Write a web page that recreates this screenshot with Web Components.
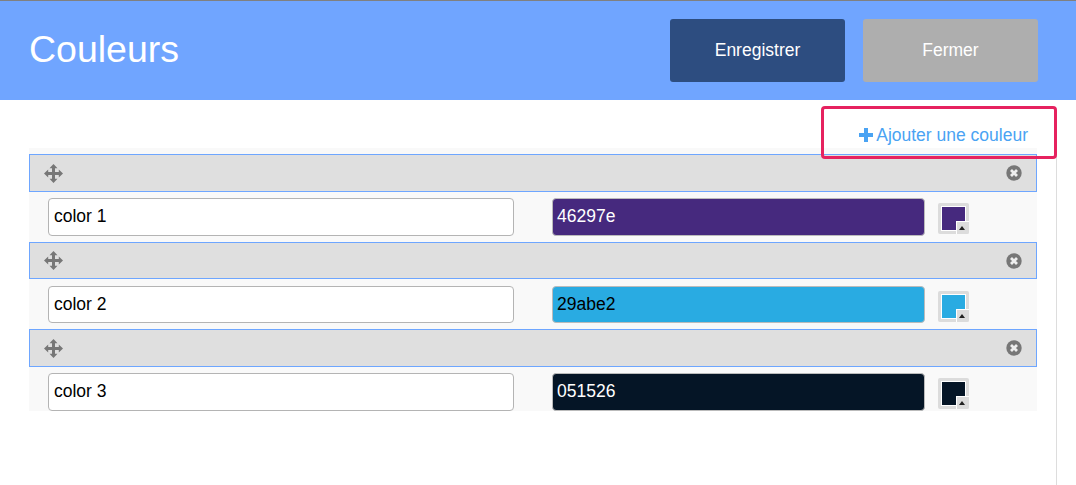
<!DOCTYPE html>
<html>
<head>
<meta charset="utf-8">
<style>
  html, body { margin: 0; padding: 0; background: #fff; overflow: hidden; }
  body { font-family: "Liberation Sans", Arial, sans-serif; }
</style>
</head>
<body>
<colors-page></colors-page>

<template id="page-tpl">
  <style>
    :host { display: block; height: 485px; position: relative; overflow: hidden; }
    header {
      display: flex; align-items: center; height: 99px;
      border-top: 1px solid #808080; background: #70a5ff;
      padding: 0 38px 0 29px;
    }
    h1 { flex: 1; margin: 0 0 2px; font-size: 37.5px; font-weight: 400; color: #fff; }
    .actions { display: flex; gap: 18px; margin-bottom: 1px; }
    .toolbar {
      height: 48px; box-sizing: border-box; width: 1028px;
      display: flex; justify-content: flex-end; align-items: flex-start;
      padding-top: 25px;
    }
    .panel {
      width: 1056px; height: 337px; box-sizing: content-box;
      border-right: 1px solid #ddd;
    }
    .list { margin: 0 19px 0 29px; padding-top: 6px; background: #f9f9f9; }
    .mark {
      position: absolute; left: 821px; top: 106px; width: 236px; height: 53px;
      box-sizing: border-box; border: 3px solid #e6225f; border-radius: 4px;
    }
  </style>
  <header>
    <h1>Couleurs</h1>
    <div class="actions">
      <flat-button style="--bg:#2d4d80">Enregistrer</flat-button>
      <flat-button style="--bg:#aeaeae">Fermer</flat-button>
    </div>
  </header>
  <div class="toolbar"><add-link>Ajouter une couleur</add-link></div>
  <div class="panel">
    <div class="list">
      <color-item name="color 1" hex="46297e" swatch="#46297e" ink="#fff"></color-item>
      <color-item name="color 2" hex="29abe2" swatch="#29abe2" ink="#000"></color-item>
      <color-item name="color 3" hex="051526" swatch="#051526" ink="#fff" last></color-item>
    </div>
  </div>
  <div class="mark"></div>
</template>

<template id="button-tpl">
  <style>
    :host {
      display: flex; align-items: center; justify-content: center;
      width: 175px; height: 63px; border-radius: 3px;
      background: var(--bg); color: #fff; font-size: 17.5px;
    }
  </style>
  <slot></slot>
</template>

<template id="add-tpl">
  <style>
    :host {
      display: flex; align-items: center; gap: 3px;
      color: #4aa3f3; font-size: 17.5px; line-height: 20px;
    }
    svg { display: block; width: 14px; height: 14px; }
  </style>
  <svg viewBox="0 0 14 14"><path fill="#4aa3f3" d="M5 0h4v5h5v4H9v5H5V9H0V5h5z"/></svg>
  <slot></slot>
</template>

<template id="item-tpl">
  <style>
    :host { display: block; }
    .bar {
      height: 37.5px; box-sizing: border-box;
      display: flex; align-items: center; justify-content: space-between;
      background: #dfdfdf; border: 1px solid #6ea6ff;
      padding: 1px 14px 0;
    }
    .move, .remove { display: block; }
    .body {
      height: 50px; box-sizing: border-box;
      display: flex; align-items: flex-start;
      padding: 6.5px 0 0 19px;
    }
    :host([last]) .body { height: 44px; }
    .field {
      height: 37.5px; box-sizing: border-box; display: flex; align-items: center;
      border: 1px solid #b4b4b4; border-radius: 4px; background: #fff;
      padding-left: 5px; font-size: 17.5px; color: #000;
    }
    .name { width: 466px; }
    .hex { width: 373px; margin-left: 38px; padding-left: 4px; border-color: #bbb; }
    .picker {
      position: relative; width: 31px; height: 31px; box-sizing: border-box;
      margin: 5px 0 0 13px; background: #dcdcdc; border-radius: 2px;
      padding: 3px;
    }
    .picker i {
      display: block; width: 25px; height: 25px; box-sizing: border-box;
      border: 1px solid #fff; background: var(--swatch);
    }
    .corner {
      position: absolute; right: 0; bottom: 0; width: 13px; height: 13px;
      background: #dcdcdc; border-left: 1px solid #fff; border-top: 1px solid #fff;
      box-sizing: border-box; border-bottom-right-radius: 2px;
    }
    .corner::after {
      content: ""; position: absolute; left: 2px; bottom: 4px;
      border: 3.5px solid transparent; border-top: 0; border-bottom: 4px solid #222;
    }
  </style>
  <div class="bar">
    <svg class="move" width="19" height="19" viewBox="0 0 19 19">
      <path fill="#777" d="M9.5 0L13.5 4.2H11V8H14.8V5.5L19 9.5L14.8 13.5V11H11V14.8H13.5L9.5 19L5.5 14.8H8V11H4.2V13.5L0 9.5L4.2 5.5V8H8V4.2H5.5z"/>
    </svg>
    <svg class="remove" width="16" height="16" viewBox="0 0 16 16">
      <circle cx="8" cy="8" r="7.7" fill="#777"/>
      <path stroke="#eee" stroke-width="2.8" d="M5 5L11 11M11 5L5 11"/>
    </svg>
  </div>
  <div class="body">
    <div class="field name"></div>
    <div class="field hex"></div>
    <div class="picker"><i></i><span class="corner"></span></div>
  </div>
</template>

<script>
  (function colorsApp(customElements) {
    'use strict';

    function stamp(el, id) {
      const root = el.attachShadow({mode: 'open'});
      root.appendChild(document.getElementById(id).content.cloneNode(true));
      return root;
    }

    class FlatButton extends HTMLElement {
      constructor() { super(); stamp(this, 'button-tpl'); }
    }

    class AddLink extends HTMLElement {
      constructor() { super(); stamp(this, 'add-tpl'); }
    }

    class ColorItem extends HTMLElement {
      constructor() { super(); stamp(this, 'item-tpl'); }

      connectedCallback() {
        const root = this.shadowRoot;
        const hex = root.querySelector('.hex');
        root.querySelector('.name').textContent = this.getAttribute('name');
        hex.textContent = this.getAttribute('hex');
        hex.style.background = this.getAttribute('swatch');
        hex.style.color = this.getAttribute('ink');
        root.querySelector('.picker').style.setProperty('--swatch', this.getAttribute('swatch'));
      }
    }

    class ColorsPage extends HTMLElement {
      constructor() { super(); stamp(this, 'page-tpl'); }
    }

    customElements.define('flat-button', FlatButton);
    customElements.define('add-link', AddLink);
    customElements.define('color-item', ColorItem);
    customElements.define('colors-page', ColorsPage);
  })(window.customElements);
</script>
</body>
</html>
